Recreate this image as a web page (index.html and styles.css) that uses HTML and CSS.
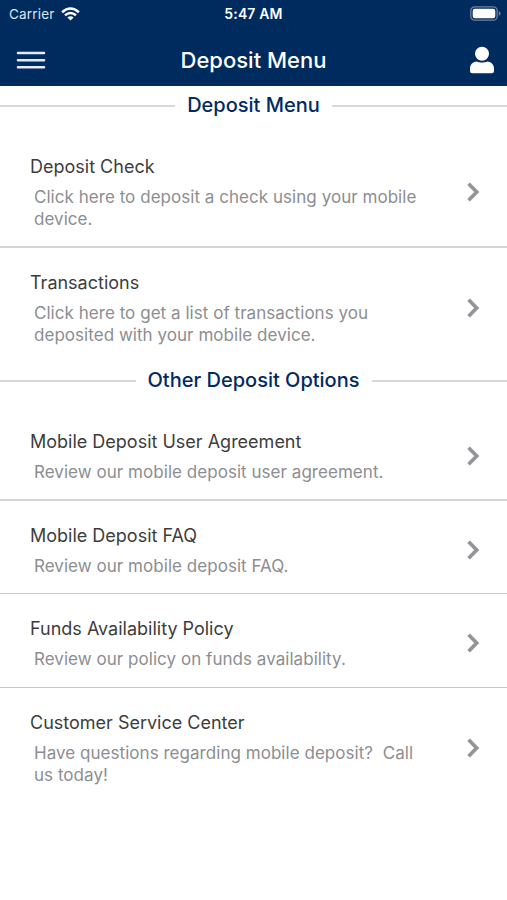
FILE: index.html
```html
<!DOCTYPE html>
<html lang="en">
<head>
<meta charset="utf-8">
<title>Deposit Menu</title>
<link rel="stylesheet" href="styles.css">
</head>
<body>
<svg class="defs" width="0" height="0" aria-hidden="true">
  <symbol id="chevron" viewBox="0 0 14 22"><path d="M2.6 2.8 10.7 11 2.6 19.2" fill="none" stroke="currentColor" stroke-width="3.7"/></symbol>
</svg>
<header class="header">
  <div class="status">
    <div class="carrier"><span>Carrier</span>
      <svg width="19" height="14" viewBox="0 0 19 14" fill="none" stroke="#fff" stroke-width="2.5"><path d="M1.1 5.2Q9.5-2.2 17.9 5.2"/><path d="M4 8.3Q9.5 3.7 15 8.3"/><path d="M9.5 13.6 6.4 10.5Q9.5 7.9 12.6 10.5Z" fill="#fff" stroke="none"/></svg>
    </div>
    <div class="time">5:47 AM</div>
    <svg class="battery" width="31" height="15" viewBox="0 0 31 15"><rect x=".8" y=".8" width="26.4" height="13.4" rx="4" fill="none" stroke="#71839f" stroke-width="1.3"/><rect x="2.7" y="2.7" width="22.6" height="9.6" rx="2.2" fill="#fff"/><path d="M28.8 5.2q1.8.6 1.8 2.3t-1.8 2.3Z" fill="#71839f"/></svg>
  </div>
  <nav class="nav">
    <svg width="30" height="20" viewBox="0 0 30 20" stroke="#e4ebf8" stroke-width="2.6" stroke-linecap="round"><path d="M2 3h26M2 10.2h26M2 17.3h26"/></svg>
    <h1 class="nav-title">Deposit Menu</h1>
    <svg class="user" width="24" height="28" viewBox="0 0 24 28" fill="#fff"><circle cx="12" cy="7.7" r="7"/><path d="M7 15.5C9 16.9 15 16.9 17 15.5 21 15.5 24 18.5 24 22.5V25q0 2.3-2.3 2.3H2.3Q0 27.3 0 25v-2.5C0 18.5 3 15.5 7 15.5Z"/></svg>
  </nav>
</header>
<main>
  <h2 class="section"><span>Deposit Menu</span></h2>
  <a class="row"><div class="text"><h3>Deposit Check</h3><p>Click here to deposit a check using your mobile device.</p></div><svg class="chevron"><use href="#chevron"/></svg></a>
  <a class="row last"><div class="text"><h3>Transactions</h3><p>Click here to get a list of transactions you deposited with your mobile device.</p></div><svg class="chevron"><use href="#chevron"/></svg></a>
  <h2 class="section"><span>Other Deposit Options</span></h2>
  <a class="row single"><div class="text"><h3>Mobile Deposit User Agreement</h3><p>Review our mobile deposit user agreement.</p></div><svg class="chevron"><use href="#chevron"/></svg></a>
  <a class="row single thin"><div class="text"><h3>Mobile Deposit FAQ</h3><p>Review our mobile deposit FAQ.</p></div><svg class="chevron"><use href="#chevron"/></svg></a>
  <a class="row single thin"><div class="text"><h3>Funds Availability Policy</h3><p>Review our policy on funds availability.</p></div><svg class="chevron"><use href="#chevron"/></svg></a>
  <a class="row last"><div class="text"><h3>Customer Service Center</h3><p>Have questions regarding mobile deposit?&nbsp; Call us today!</p></div><svg class="chevron"><use href="#chevron"/></svg></a>
</main>
</body>
</html>
```
FILE: styles.css
```css
* { box-sizing: border-box; }
body { margin: 0; background: #fff; font-family: Inter, "Liberation Sans", sans-serif; }
h1, h2, h3, p { margin: 0; font-weight: 400; }
svg { display: block; flex: none; }
.defs { position: absolute; }
.header { height: 86px; background: #002b5e; color: #fff; }
.status { display: grid; grid-template-columns: 1fr auto 1fr; align-items: center; height: 27px; padding: 0 6px; }
.carrier { display: flex; align-items: center; gap: 6px; padding-left: 3px; font-size: 13.5px; letter-spacing: .2px; color: #dbe5f3; }
.time { font-size: 14px; font-weight: 600; letter-spacing: .15px; }
.battery { justify-self: end; }
.nav { display: grid; grid-template-columns: 1fr auto 1fr; align-items: center; height: 66px; padding: 0 13px; }
.nav svg:first-child { margin-left: 3px; }
.nav-title { font-size: 22px; font-weight: 550; letter-spacing: 0; }
.user { justify-self: end; }
main { padding-top: 1px; }
.section { display: flex; align-items: center; gap: 12px; height: 38px; margin-bottom: 7px; color: #002b62; font-size: 20px; font-weight: 500; }
.section span { padding-bottom: 2px; }
.section::before, .section::after { content: ""; flex: 1; height: 2px; background: #d8d8d8; }
.row { display: flex; align-items: center; padding: 24px 27px 16px 30px; border-bottom: 2px solid #d3d4d5; }
.row.single { height: 93.5px; padding-bottom: 15.5px; }
.row.thin { padding-bottom: 16.5px; border-bottom: 1px solid #c4c6c7; }
.row.last { border-bottom: 0; }
.text { width: 395px; margin-right: auto; }
h3 { font-size: 18px; line-height: 22px; color: #3d3d3d; }
p { margin: 8px 0 0 4px; font-size: 17px; line-height: 22px; letter-spacing: .04px; color: #8c8e92; }
.chevron { width: 14px; height: 22px; margin-bottom: 2px; color: #939498; }
```
